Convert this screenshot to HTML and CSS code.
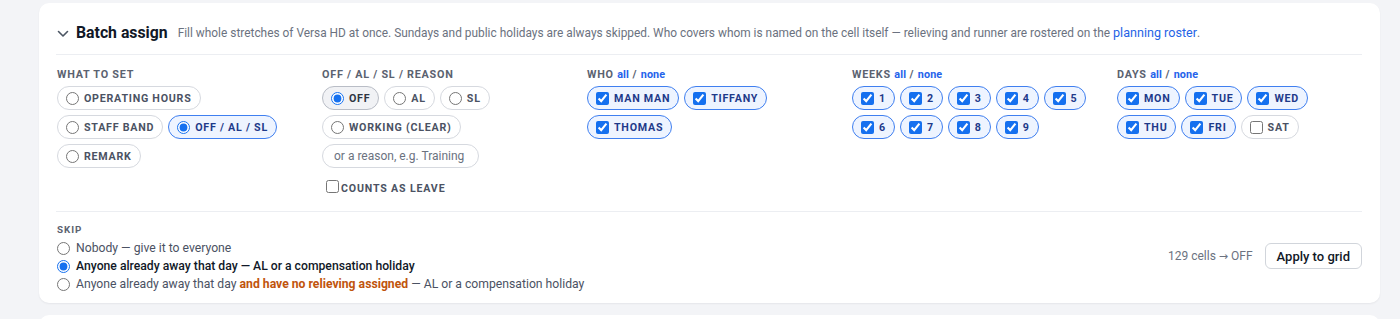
FILE: index.html
```html
<!DOCTYPE html>
<html lang="en">
<head>
<meta charset="utf-8">
<title>Batch assign</title>
<link rel="stylesheet" href="styles.css">
</head>
<body>
<div class="page">
  <section class="card">
    <header class="card-head">
      <svg class="chev" width="12" height="8" viewBox="0 0 12 8"><path d="M1.5 1.5 L6 6 L10.5 1.5" fill="none" stroke="#4b5563" stroke-width="1.6" stroke-linecap="round" stroke-linejoin="round"/></svg>
      <h2 class="title">Batch assign</h2>
      <p class="desc">Fill whole stretches of Versa HD at once. Sundays and public holidays are always skipped. Who covers whom is named on the cell itself — relieving and runner are rostered on the <a class="link" href="#">planning roster</a>.</p>
    </header>

    <div class="cols">
      <div class="col">
        <div class="label">What to set</div>
        <div class="pills">
          <label class="pill"><input type="radio" name="what"><span>Operating hours</span></label>
          <label class="pill"><input type="radio" name="what"><span>Staff band</span></label>
          <label class="pill on"><input type="radio" name="what" checked><span>Off / AL / SL</span></label>
          <label class="pill"><input type="radio" name="what"><span>Remark</span></label>
        </div>
      </div>

      <div class="col">
        <div class="label">Off / AL / SL / Reason</div>
        <div class="pills">
          <label class="pill sel"><input type="radio" name="kind" checked><span>Off</span></label>
          <label class="pill"><input type="radio" name="kind"><span>AL</span></label>
          <label class="pill"><input type="radio" name="kind"><span>SL</span></label>
          <label class="pill"><input type="radio" name="kind"><span>Working (clear)</span></label>
          <input class="reason" type="text" placeholder="or a reason, e.g. Training">
        </div>
        <label class="leave"><input type="checkbox"><span>Counts as leave</span></label>
      </div>

      <div class="col">
        <div class="label">Who <a class="mini" href="#">all</a> / <a class="mini" href="#">none</a></div>
        <div class="pills">
          <label class="pill on"><input type="checkbox" checked><span>Man Man</span></label>
          <label class="pill on"><input type="checkbox" checked><span>Tiffany</span></label>
          <label class="pill on"><input type="checkbox" checked><span>Thomas</span></label>
        </div>
      </div>

      <div class="col">
        <div class="label">Weeks <a class="mini" href="#">all</a> / <a class="mini" href="#">none</a></div>
        <div class="pills">
          <label class="pill on"><input type="checkbox" checked><span>1</span></label>
          <label class="pill on"><input type="checkbox" checked><span>2</span></label>
          <label class="pill on"><input type="checkbox" checked><span>3</span></label>
          <label class="pill on"><input type="checkbox" checked><span>4</span></label>
          <label class="pill on"><input type="checkbox" checked><span>5</span></label>
          <label class="pill on"><input type="checkbox" checked><span>6</span></label>
          <label class="pill on"><input type="checkbox" checked><span>7</span></label>
          <label class="pill on"><input type="checkbox" checked><span>8</span></label>
          <label class="pill on"><input type="checkbox" checked><span>9</span></label>
        </div>
      </div>

      <div class="col">
        <div class="label">Days <a class="mini" href="#">all</a> / <a class="mini" href="#">none</a></div>
        <div class="pills">
          <label class="pill on"><input type="checkbox" checked><span>Mon</span></label>
          <label class="pill on"><input type="checkbox" checked><span>Tue</span></label>
          <label class="pill on"><input type="checkbox" checked><span>Wed</span></label>
          <label class="pill on"><input type="checkbox" checked><span>Thu</span></label>
          <label class="pill on"><input type="checkbox" checked><span>Fri</span></label>
          <label class="pill"><input type="checkbox"><span>Sat</span></label>
        </div>
      </div>
    </div>

    <div class="skip-row">
      <div class="skip">
        <div class="label small">Skip</div>
        <label class="opt"><input type="radio" name="skip"><span>Nobody — give it to everyone</span></label>
        <label class="opt strong"><input type="radio" name="skip" checked><span>Anyone already away that day — AL or a compensation holiday</span></label>
        <label class="opt"><input type="radio" name="skip"><span>Anyone already away that day <b class="warn">and have no relieving assigned</b> — AL or a compensation holiday</span></label>
      </div>
      <div class="apply">
        <span class="count">129 cells <span class="arrow">→</span> OFF</span>
        <button class="btn" type="button">Apply to grid</button>
      </div>
    </div>
  </section>
  <section class="card next"></section>
</div>
</body>
</html>
```

FILE: styles.css
```css
* { box-sizing: border-box; }
html, body { margin: 0; padding: 0; }
body {
  background: #f3f4f7;
  font-family: Roboto, "Noto Sans", "Liberation Sans", sans-serif;
  color: #1f2937;
  overflow: hidden;
}
.page {
  padding: 3px 20px 0 39px;
  display: flex;
  flex-direction: column;
  gap: 12px;
}
.card {
  background: #fff;
  border-radius: 10px;
  box-shadow: 0 1px 2px rgba(16, 24, 40, 0.06);
  padding: 0 18px 10px 17px;
}
.card.next { height: 60px; }
.card-head {
  display: flex;
  align-items: center;
  height: 52px;
  padding-top: 8px;
  border-bottom: 1px solid #eceef2;
}
.chev { margin: 2px 7px 0 1px; flex: none; }
.title {
  margin: 0 10px 0 0;
  font-size: 15.8px;
  font-weight: 700;
  color: #111827;
  white-space: nowrap;
}
.desc {
  margin: 0;
  font-size: 11.9px;
  color: #6b7280;
  white-space: nowrap;
}
.link { color: #1f63e6; text-decoration: none; font-size: 12.6px; }

.cols {
  display: grid;
  grid-template-columns: repeat(5, 1fr);
  gap: 20px;
  padding: 13px 0 15px 1px;
  border-bottom: 1px solid #eceef2;
}
.label {
  font-size: 10.8px;
  font-weight: 700;
  letter-spacing: 0.07em;
  text-transform: uppercase;
  color: #5b6270;
  margin-bottom: 5px;
  line-height: 13px;
}
.label .mini {
  text-transform: none;
  letter-spacing: 0.01em;
  color: #2563eb;
  text-decoration: none;
}
.pills {
  display: flex;
  flex-wrap: wrap;
  gap: 5px 5px;
}
.pill {
  display: inline-flex;
  align-items: center;
  gap: 5px;
  height: 24px;
  padding: 0 8px 0 8px;
  border: 1px solid #d6d9df;
  border-radius: 999px;
  background: #fff;
  font-size: 10.7px;
  font-weight: 700;
  letter-spacing: 0.07em;
  text-transform: uppercase;
  color: #4b5263;
  white-space: nowrap;
}
.pill input {
  margin: 0;
  width: 13px;
  height: 13px;
  accent-color: #1570ef;
}
.pill.on {
  background: #eef4ff;
  border-color: #3f7ff0;
  color: #1e3a8a;
}
.pill.sel {
  background: #f1f2f5;
  border-color: #b9bdc6;
  color: #2f3542;
}
.reason {
  width: 157px;
  height: 24px;
  border: 1px solid #d6d9df;
  border-radius: 999px;
  padding: 0 11px;
  font-family: inherit;
  font-size: 12px;
  color: #374151;
  outline: none;
}
.reason::placeholder { color: #6b7280; }
.leave {
  display: flex;
  align-items: center;
  gap: 2px;
  margin: 12px 0 0 4px;
  font-size: 10.6px;
  font-weight: 700;
  letter-spacing: 0.08em;
  text-transform: uppercase;
  color: #4b5263;
}
.leave input { margin: 0 0 3px 0; width: 13px; height: 13px; }

.skip-row {
  display: flex;
  align-items: center;
  justify-content: space-between;
  padding: 11px 0 0 1px;
}
.label.small {
  font-size: 9.8px;
  letter-spacing: 0.1em;
  margin-bottom: 3px;
}
.opt {
  display: flex;
  align-items: center;
  gap: 6px;
  height: 18px;
  font-size: 12.2px;
  color: #4b5263;
  white-space: nowrap;
}
.opt input {
  margin: 0;
  width: 13px;
  height: 13px;
  accent-color: #1570ef;
}
.opt.strong { font-weight: 500; color: #111827; }
.warn { color: #c0540c; font-weight: 700; }
.apply {
  display: flex;
  align-items: center;
  gap: 12px;
  margin-bottom: 4px;
}
.count { font-size: 12px; color: #6b7280; }
.arrow { font-family: "DejaVu Sans", sans-serif; font-size: 11px; }
.btn {
  height: 26px;
  padding: 0 11px;
  border: 1px solid #d1d5db;
  border-radius: 6px;
  background: #fff;
  font-family: inherit;
  font-size: 13px;
  font-weight: 500;
  color: #111827;
}
```
